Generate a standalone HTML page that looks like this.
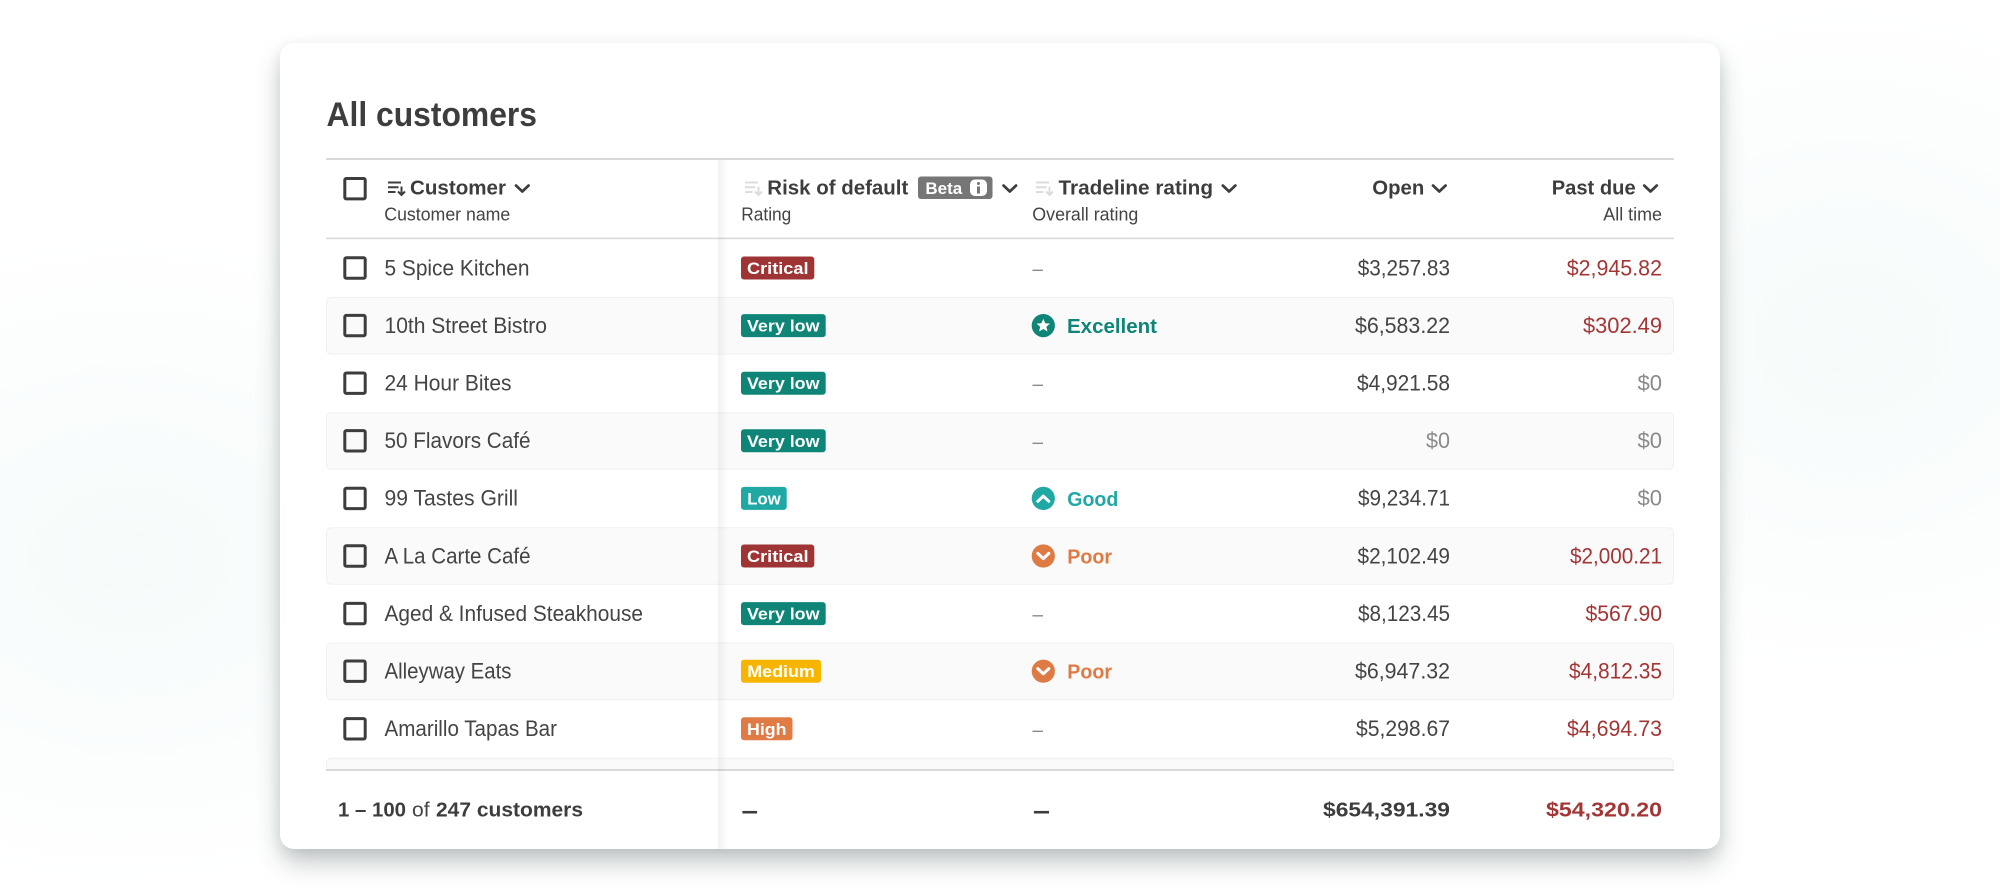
<!DOCTYPE html>
<html lang="en"><head><meta charset="utf-8"><title>All customers</title>
<style>
html,body{margin:0;padding:0;width:2000px;height:893px;overflow:hidden;background:#fff}
#bg{position:absolute;left:0;top:0;width:2000px;height:893px;background:radial-gradient(ellipse 420px 330px at 130px 560px,#f5fbfa 0%,rgba(245,251,250,0) 100%),radial-gradient(ellipse 400px 340px at 1850px 340px,#f5fbfa 0%,rgba(245,251,250,0) 100%)}
#card{position:absolute;left:280px;top:43px;width:1440px;height:806px;background:#fff;border-radius:14px;box-shadow:0 14px 26px -2px rgba(40,60,60,.3),0 4px 12px rgba(40,60,60,.08)}
svg{position:absolute;left:0;top:0;filter:blur(.3px)}
text{font-family:"Liberation Sans",sans-serif;fill:#444;font-size:22px}
.b{font-weight:700;font-size:20.5px;fill:#3d3d3d}
.s{font-size:18px}
.w{font-weight:700;font-size:17px;fill:#fff}
.t{font-weight:700;font-size:20.5px;fill:#3d3d3d}
.r{fill:#a33535}
.g{fill:#8a8a8a}
.d{fill:#8a8a8a;font-size:20px}
.f{font-weight:700;font-size:26px;fill:#3d3d3d}
</style></head><body>
<div id="bg"></div><div id="card"></div>
<svg width="2000" height="893" viewBox="0 0 2000 893" xmlns="http://www.w3.org/2000/svg">
<defs>
<linearGradient id="sh" x1="0" x2="1" y1="0" y2="0"><stop offset="0" stop-color="#000" stop-opacity=".05"/><stop offset="1" stop-color="#000" stop-opacity="0"/></linearGradient>
<clipPath id="lastclip"><rect x="320" y="750" width="1360" height="20"/></clipPath>
</defs>
<text x="326.5" y="126" font-weight="700" style="font-size:34px;fill:#3d3d3d" textLength="210.5" lengthAdjust="spacingAndGlyphs">All customers</text>

<g fill="#fafafa" stroke="#f0f0f0" stroke-width="1">
<rect x="326.5" y="297.5" width="1347" height="56.6" rx="5"/>
<rect x="326.5" y="412.7" width="1347" height="56.6" rx="5"/>
<rect x="326.5" y="527.7" width="1347" height="56.6" rx="5"/>
<rect x="326.5" y="643" width="1347" height="56.6" rx="5"/>
<rect x="326.5" y="758.3" width="1347" height="56.6" rx="5" clip-path="url(#lastclip)"/>
</g>
<g fill="#d9d9d9">
<rect x="326" y="158" width="1348" height="2"/>
<rect x="326" y="237.6" width="1348" height="1.6"/>
<rect x="326" y="769" width="1348" height="2"/>
</g>
<rect x="718" y="160" width="10" height="689" fill="url(#sh)"/>

<g fill="none" stroke="#3d3d3d" stroke-width="3">
<rect x="344.8" y="178.5" width="20.4" height="20.4" rx="1.5"/>
<rect x="344.8" y="257.8" width="20.4" height="20.4" rx="1.5"/>
<rect x="344.8" y="315.4" width="20.4" height="20.4" rx="1.5"/>
<rect x="344.8" y="373" width="20.4" height="20.4" rx="1.5"/>
<rect x="344.8" y="430.6" width="20.4" height="20.4" rx="1.5"/>
<rect x="344.8" y="488.2" width="20.4" height="20.4" rx="1.5"/>
<rect x="344.8" y="545.8" width="20.4" height="20.4" rx="1.5"/>
<rect x="344.8" y="603.4" width="20.4" height="20.4" rx="1.5"/>
<rect x="344.8" y="661" width="20.4" height="20.4" rx="1.5"/>
<rect x="344.8" y="718.6" width="20.4" height="20.4" rx="1.5"/>
</g>

<g fill="none" stroke="#3d3d3d" stroke-width="2"><path d="M388 182.5h13M388 187.3h10.5M388 192h7.5M401.5 186.5v8M398 191.5l3.5 3.5 3.5-3.5"/></g>
<g fill="none" stroke="#dcdcdc" stroke-width="2"><path d="M745 182.5h13M745 187.3h10.5M745 192h7.5M758.5 186.5v8M755 191.5l3.5 3.5 3.5-3.5"/></g>
<g fill="none" stroke="#dcdcdc" stroke-width="2"><path d="M1036 182.5h13M1036 187.3h10.5M1036 192h7.5M1049.5 186.5v8M1046 191.5l3.5 3.5 3.5-3.5"/></g>

<text class="b" x="410" y="194.5" textLength="96" lengthAdjust="spacingAndGlyphs">Customer</text>
<text class="b" x="767.3" y="194.5" textLength="141" lengthAdjust="spacingAndGlyphs">Risk of default</text>
<text class="b" x="1058.5" y="194.5" textLength="154.5" lengthAdjust="spacingAndGlyphs">Tradeline rating</text>
<text class="b" x="1372.3" y="194.5" textLength="52" lengthAdjust="spacingAndGlyphs">Open</text>
<text class="b" x="1551.7" y="194.5" textLength="84" lengthAdjust="spacingAndGlyphs">Past due</text>
<text class="s" x="384.3" y="220.5" textLength="126" lengthAdjust="spacingAndGlyphs">Customer name</text>
<text class="s" x="741.3" y="220.5" textLength="50" lengthAdjust="spacingAndGlyphs">Rating</text>
<text class="s" x="1032.3" y="220.5" textLength="106" lengthAdjust="spacingAndGlyphs">Overall rating</text>
<text class="s" x="1603.3" y="220.5" textLength="58.7" lengthAdjust="spacingAndGlyphs">All time</text>

<g fill="none" stroke="#3d3d3d" stroke-width="2.7" stroke-linecap="round" stroke-linejoin="round">
<path d="M516 185.5l6.3 6 6.3-6"/>
<path d="M1003.5 185.5l6.3 6 6.3-6"/>
<path d="M1222.8 185.5l6.3 6 6.3-6"/>
<path d="M1433 185.5l6.3 6 6.3-6"/>
<path d="M1644.2 185.5l6.3 6 6.3-6"/>
</g>

<rect x="918" y="176.5" width="74.5" height="22.5" rx="3" fill="#767676"/>
<text class="w" x="925.4" y="194" textLength="36.8" lengthAdjust="spacingAndGlyphs">Beta</text>
<rect x="970" y="179.5" width="17" height="16.5" rx="5" fill="#fff"/>
<rect x="977" y="182" width="3" height="3" rx="1.5" fill="#767676"/>
<rect x="977" y="186.5" width="3" height="7" fill="#767676"/>

<text x="384.5" y="275.3" textLength="145" lengthAdjust="spacingAndGlyphs">5 Spice Kitchen</text>
<text x="384.5" y="332.9" textLength="162.5" lengthAdjust="spacingAndGlyphs">10th Street Bistro</text>
<text x="384.5" y="390.5" textLength="127" lengthAdjust="spacingAndGlyphs">24 Hour Bites</text>
<text x="384.5" y="448.1" textLength="146" lengthAdjust="spacingAndGlyphs">50 Flavors Café</text>
<text x="384.5" y="505.7" textLength="133.5" lengthAdjust="spacingAndGlyphs">99 Tastes Grill</text>
<text x="384.5" y="563.3" textLength="146" lengthAdjust="spacingAndGlyphs">A La Carte Café</text>
<text x="384.5" y="620.9" textLength="258.5" lengthAdjust="spacingAndGlyphs">Aged &amp; Infused Steakhouse</text>
<text x="384.5" y="678.5" textLength="127" lengthAdjust="spacingAndGlyphs">Alleyway Eats</text>
<text x="384.5" y="736.1" textLength="172.5" lengthAdjust="spacingAndGlyphs">Amarillo Tapas Bar</text>

<rect x="741" y="256.5" width="73.3" height="23" rx="3" fill="#9e3434"/>
<text class="w" x="747" y="274" textLength="61.5" lengthAdjust="spacingAndGlyphs">Critical</text>
<rect x="741" y="314.1" width="84.7" height="23" rx="3" fill="#0e8577"/>
<text class="w" x="747" y="331.6" textLength="72.5" lengthAdjust="spacingAndGlyphs">Very low</text>
<rect x="741" y="371.7" width="84.7" height="23" rx="3" fill="#0e8577"/>
<text class="w" x="747" y="389.2" textLength="72.5" lengthAdjust="spacingAndGlyphs">Very low</text>
<rect x="741" y="429.3" width="84.7" height="23" rx="3" fill="#0e8577"/>
<text class="w" x="747" y="446.8" textLength="72.5" lengthAdjust="spacingAndGlyphs">Very low</text>
<rect x="741" y="486.9" width="45.7" height="23" rx="3" fill="#1fa8a4"/>
<text class="w" x="747.3" y="504.4" textLength="33.4" lengthAdjust="spacingAndGlyphs">Low</text>
<rect x="741" y="544.5" width="73.3" height="23" rx="3" fill="#9e3434"/>
<text class="w" x="747" y="562" textLength="61.5" lengthAdjust="spacingAndGlyphs">Critical</text>
<rect x="741" y="602.1" width="84.7" height="23" rx="3" fill="#0e8577"/>
<text class="w" x="747" y="619.6" textLength="72.5" lengthAdjust="spacingAndGlyphs">Very low</text>
<rect x="741" y="659.7" width="80" height="23" rx="3" fill="#f7b500"/>
<text class="w" x="747.3" y="677.2" textLength="67.5" lengthAdjust="spacingAndGlyphs">Medium</text>
<rect x="741" y="717.3" width="51.5" height="23" rx="3" fill="#e07b45"/>
<text class="w" x="747" y="734.8" textLength="39.5" lengthAdjust="spacingAndGlyphs">High</text>

<text class="d" x="1032.5" y="275.5" textLength="10.5" lengthAdjust="spacingAndGlyphs">–</text>
<circle cx="1043.3" cy="325.6" r="11.6" fill="#0e8577"/>
<polygon fill="#fff" points="1043.3,318.8 1045.2,323.2 1050,323.6 1046.4,326.8 1047.5,331.5 1043.3,329 1039.1,331.5 1040.2,326.8 1036.6,323.6 1041.4,323.2"/>
<text class="t" style="fill:#0e8577" x="1067" y="333" textLength="90" lengthAdjust="spacingAndGlyphs">Excellent</text>
<text class="d" x="1032.5" y="390.7" textLength="10.5" lengthAdjust="spacingAndGlyphs">–</text>
<text class="d" x="1032.5" y="448.3" textLength="10.5" lengthAdjust="spacingAndGlyphs">–</text>
<circle cx="1043.3" cy="498.4" r="11.6" fill="#1fa8a4"/>
<path d="M1037.8 501.3l5.5-5.2 5.5 5.2" fill="none" stroke="#fff" stroke-width="3" stroke-linecap="round" stroke-linejoin="round"/>
<text class="t" style="fill:#1fa8a4" x="1067.3" y="505.8" textLength="51" lengthAdjust="spacingAndGlyphs">Good</text>
<circle cx="1043.3" cy="556" r="11.6" fill="#de7b45"/>
<path d="M1037.8 553.4l5.5 5.2 5.5-5.2" fill="none" stroke="#fff" stroke-width="3" stroke-linecap="round" stroke-linejoin="round"/>
<text class="t" style="fill:#de7b45" x="1067.3" y="563.4" textLength="44.7" lengthAdjust="spacingAndGlyphs">Poor</text>
<text class="d" x="1032.5" y="621.1" textLength="10.5" lengthAdjust="spacingAndGlyphs">–</text>
<circle cx="1043.3" cy="671.2" r="11.6" fill="#de7b45"/>
<path d="M1037.8 668.6l5.5 5.2 5.5-5.2" fill="none" stroke="#fff" stroke-width="3" stroke-linecap="round" stroke-linejoin="round"/>
<text class="t" style="fill:#de7b45" x="1067.3" y="678.6" textLength="44.7" lengthAdjust="spacingAndGlyphs">Poor</text>
<text class="d" x="1032.5" y="736.3" textLength="10.5" lengthAdjust="spacingAndGlyphs">–</text>

<text x="1357.7" y="275.3" textLength="92.3" lengthAdjust="spacingAndGlyphs">$3,257.83</text>
<text x="1355" y="332.9" textLength="95" lengthAdjust="spacingAndGlyphs">$6,583.22</text>
<text x="1357" y="390.5" textLength="93" lengthAdjust="spacingAndGlyphs">$4,921.58</text>
<text class="g" x="1426" y="448.1" textLength="24" lengthAdjust="spacingAndGlyphs">$0</text>
<text x="1358" y="505.7" textLength="92" lengthAdjust="spacingAndGlyphs">$9,234.71</text>
<text x="1357.5" y="563.3" textLength="92.5" lengthAdjust="spacingAndGlyphs">$2,102.49</text>
<text x="1358" y="620.9" textLength="92" lengthAdjust="spacingAndGlyphs">$8,123.45</text>
<text x="1355" y="678.5" textLength="95" lengthAdjust="spacingAndGlyphs">$6,947.32</text>
<text x="1356" y="736.1" textLength="94" lengthAdjust="spacingAndGlyphs">$5,298.67</text>

<text class="r" x="1566.7" y="275.3" textLength="95.3" lengthAdjust="spacingAndGlyphs">$2,945.82</text>
<text class="r" x="1583" y="332.9" textLength="79" lengthAdjust="spacingAndGlyphs">$302.49</text>
<text class="g" x="1637.5" y="390.5" textLength="24.5" lengthAdjust="spacingAndGlyphs">$0</text>
<text class="g" x="1637.5" y="448.1" textLength="24.5" lengthAdjust="spacingAndGlyphs">$0</text>
<text class="g" x="1637.5" y="505.7" textLength="24.5" lengthAdjust="spacingAndGlyphs">$0</text>
<text class="r" x="1570" y="563.3" textLength="92" lengthAdjust="spacingAndGlyphs">$2,000.21</text>
<text class="r" x="1585.5" y="620.9" textLength="76.5" lengthAdjust="spacingAndGlyphs">$567.90</text>
<text class="r" x="1569" y="678.5" textLength="93" lengthAdjust="spacingAndGlyphs">$4,812.35</text>
<text class="r" x="1567" y="736.1" textLength="95" lengthAdjust="spacingAndGlyphs">$4,694.73</text>

<text class="t" x="338" y="816.5" textLength="68" lengthAdjust="spacingAndGlyphs">1 – 100</text>
<text x="412" y="816.5" style="font-size:20.5px" textLength="17.6" lengthAdjust="spacingAndGlyphs">of</text>
<text class="t" x="436" y="816.5" textLength="147" lengthAdjust="spacingAndGlyphs">247 customers</text>
<text class="f" x="741.5" y="819" textLength="16.5" lengthAdjust="spacingAndGlyphs">–</text>
<text class="f" x="1033" y="819" textLength="17" lengthAdjust="spacingAndGlyphs">–</text>
<text class="t" x="1323" y="816.5" textLength="127" lengthAdjust="spacingAndGlyphs">$654,391.39</text>
<text class="t" style="fill:#a33535" x="1546" y="816.5" textLength="116" lengthAdjust="spacingAndGlyphs">$54,320.20</text>
</svg>
</body></html>
